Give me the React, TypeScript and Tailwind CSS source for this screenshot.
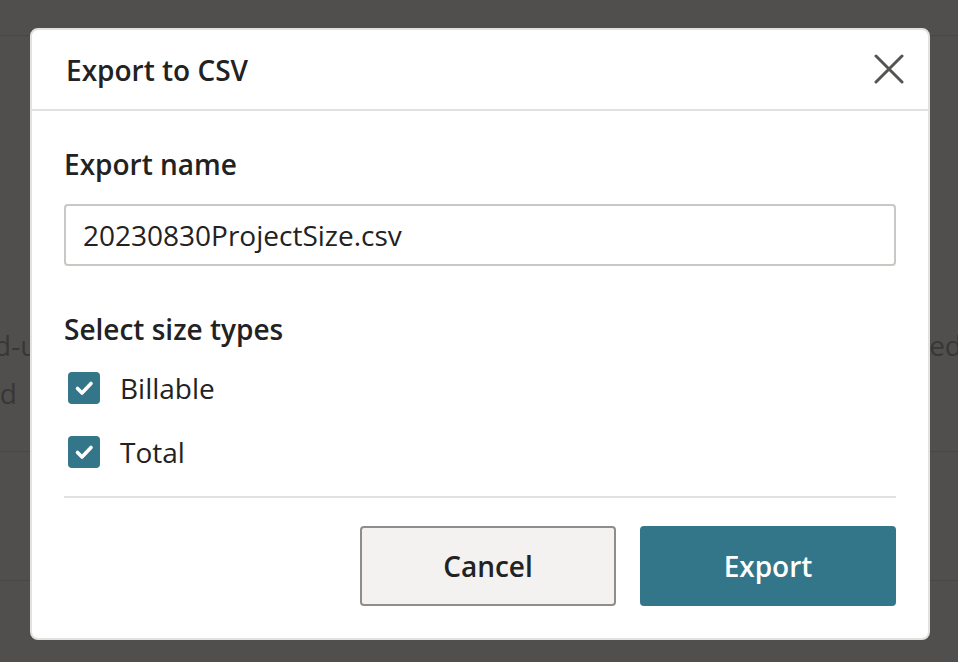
import React from "react";

function Check() {
  return (
    <span className="flex h-[32px] w-[32px] items-center justify-center rounded-[4px] bg-[#337589]">
      <svg width="32" height="32" viewBox="0 0 32 32" fill="none">
        <path d="M9.5 16.5 L14 21 L23 11.5" stroke="white" strokeWidth="3.6" strokeLinecap="round" strokeLinejoin="round" />
      </svg>
    </span>
  );
}

export default function App() {
  return (
    <div
      className="relative h-[662px] w-[958px] overflow-hidden bg-[#504f4d]"
      style={{ fontFamily: '"Open Sans", "Noto Sans", sans-serif' }}
    >
      {/* underlying page (dimmed) */}
      <div className="flex h-full flex-col text-[28px] text-[#383735]">
        <div className="h-[36px] border-b border-[#484745]" />
        <div className="flex h-[416px] flex-col justify-start border-b border-[#484745] pt-[288px]">
          <div className="flex justify-between leading-[42px]">
            <span className="-ml-[6px]">d-u</span>
            <span className="-mr-[4px]">led</span>
          </div>
          <div className="leading-[42px] -ml-[16px] mt-[6px]">ed</div>
        </div>
        <div className="h-[129px] border-b border-[#484745]" />
      </div>

      {/* modal */}
      <div className="absolute left-[30px] top-[28px] w-[900px] rounded-[8px] border-2 border-[#e2e1dd] bg-white text-[#222222]">
        <div className="flex h-[81px] items-center justify-between border-b-2 border-[#e2e1dd] pl-[34px] pr-[24px]">
          <h2 className="mt-[1px] text-[28px] font-semibold leading-[42px]">Export to CSV</h2>
          <svg width="30" height="30" viewBox="0 0 30 30" fill="none" className="mt-[-2px]">
            <path d="M2 2 L28 28 M28 2 L2 28" stroke="#555452" strokeWidth="3" strokeLinecap="round" />
          </svg>
        </div>
        <div className="flex flex-col px-[32px] pb-[32px] pt-[32px]">
          <label className="text-[28px] font-semibold leading-[42px]">Export name</label>
          <div className="mt-[19px] flex h-[62px] items-center rounded-[4px] border-2 border-[#c9c8c4] px-[17px] text-[28px] leading-[42px]">
            20230830ProjectSize.csv
          </div>
          <div className="mt-[42px] text-[28px] font-semibold leading-[42px]">Select size types</div>
          <div className="mt-[17px] flex items-center gap-[20px] pl-[4px] text-[28px] leading-[42px]">
            <Check />
            <span>Billable</span>
          </div>
          <div className="mt-[22px] flex items-center gap-[20px] pl-[4px] text-[28px] leading-[42px]">
            <Check />
            <span>Total</span>
          </div>
          <div className="mt-[23px] h-[2px] bg-[#e2e1dd]" />
          <div className="mt-[28px] flex justify-end gap-[24px]">
            <button className="flex h-[80px] w-[256px] items-center justify-center rounded-[4px] border-2 border-[#8f8d89] bg-[#f3f2f0] text-[28px] font-semibold text-[#222222]">
              Cancel
            </button>
            <button className="flex h-[80px] w-[256px] items-center justify-center rounded-[4px] bg-[#337589] text-[28px] font-semibold text-white">
              Export
            </button>
          </div>
        </div>
      </div>
    </div>
  );
}
